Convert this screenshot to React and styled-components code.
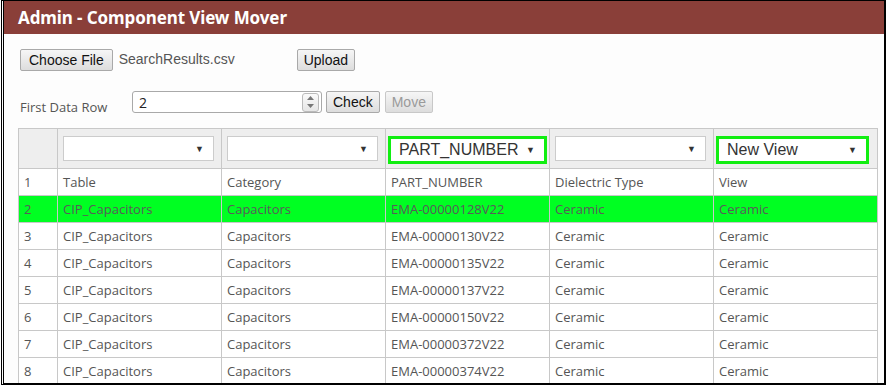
import React from "react";
import styled, { createGlobalStyle } from "styled-components";

const Global = createGlobalStyle`
  html, body { margin: 0; padding: 0; background: #fff; }
  body { font-family: "Open Sans", "Noto Sans", sans-serif; }
`;

const Frame = styled.div`
  margin-left: 1px;
  width: 880px;
  height: 382px;
  border-left: 3px double #000;
  border-top: 1px solid #000;
  border-right: 2px solid #000;
  border-bottom: 2px solid #000;
  overflow: hidden;
  background: #fdfdfd;
`;

const Header = styled.div`
  height: 33px;
  background: #8a3f39;
  color: #fff;
  font-family: "Noto Sans", sans-serif;
  font-weight: 700;
  font-size: 17px;
  letter-spacing: -0.1px;
  line-height: 34px;
  padding-left: 14px;
`;

const Body = styled.div`
  padding: 15px 0 0 14px;
`;

const Row = styled.div`
  display: flex;
  align-items: center;
  height: 22px;
  margin-left: 2px;
  margin-bottom: ${(p) => p.$mb || 0}px;
`;

const Btn = styled.button`
  height: 22px;
  padding: 0 ${(p) => p.$px ?? 6}px;
  font-family: "Liberation Sans", Arial, sans-serif;
  font-size: 14px;
  color: ${(p) => (p.disabled ? "#9a9a9a" : "#111")};
  background: linear-gradient(#f6f6f6, #dddddd);
  border: 1px solid ${(p) => (p.disabled ? "#c8c8c8" : "#a9a9a9")};
  border-radius: 2px;
  margin-left: ${(p) => p.$ml || 0}px;
  cursor: default;
`;

const FileName = styled.span`
  font-family: "Liberation Sans", Arial, sans-serif;
  font-size: 14px;
  color: #555;
  margin-left: 6px;
  width: 178px;
  position: relative;
  top: -1px;
`;

const Label = styled.span`
  font-size: 13px;
  color: #555;
  width: 112px;
  position: relative;
  top: 5px;
`;

const NumBox = styled.div`
  width: 182px;
  height: 20px;
  border: 1px solid #a9a9a9;
  border-radius: 3px;
  background: #fff;
  display: flex;
  align-items: center;
  justify-content: space-between;
  padding-left: 6px;
  font-size: 14px;
  color: #222;
  box-sizing: content-box;
`;

const Spin = styled.div`
  width: 15px;
  height: 17px;
  margin-right: 2px;
  border: 1px solid #bbb;
  border-radius: 3px;
  background: linear-gradient(#fafafa, #e6e6e6);
  display: flex;
  flex-direction: column;
  align-items: center;
  justify-content: space-around;
`;

const Table = styled.table`
  border-collapse: collapse;
  width: 859px;
  margin-top: 15px;
  table-layout: fixed;
  font-size: 13px;
  color: #555;
`;

const SelRow = styled.tr`
  background: #eeeeee;
  height: 40px;
`;

const Td = styled.td`
  border: 1px solid #c8c8c8;
  padding: 0 0 0 5px;
  height: 26px;
  white-space: nowrap;
  overflow: hidden;
`;

const DataRow = styled.tr`
  background: ${(p) => (p.$hl ? "#00ff22" : "#fff")};
  color: ${(p) => (p.$hl ? "#5a5a5a" : "#555")};
`;

const Select = styled.div`
  width: ${(p) => p.$w}px;
  height: ${(p) => (p.$hl ? 24 : 25)}px;
  margin-top: ${(p) => (p.$hl ? 2 : 0)}px;
  margin-left: ${(p) => (p.$hl ? -1 : 0)}px;
  background: #fff;
  border: 1px solid #cccccc;
  outline: ${(p) => (p.$hl ? "3px solid #11ee11" : "none")};
  outline-offset: -1px;
  display: flex;
  align-items: center;
  justify-content: space-between;
  padding: 0 9px 0 ${(p) => (p.$hl ? 8 : 7)}px;
  box-sizing: border-box;
  font-family: "Liberation Sans", Arial, sans-serif;
  font-size: 16px;
  color: #333;
`;

const Arrow = styled.span`
  font-size: 9px;
  color: #333;
`;

const cols = [39, 164, 164, 164, 164, 164];

const rows = [
  ["1", "Table", "Category", "PART_NUMBER", "Dielectric Type", "View"],
  ["2", "CIP_Capacitors", "Capacitors", "EMA-00000128V22", "Ceramic", "Ceramic"],
  ["3", "CIP_Capacitors", "Capacitors", "EMA-00000130V22", "Ceramic", "Ceramic"],
  ["4", "CIP_Capacitors", "Capacitors", "EMA-00000135V22", "Ceramic", "Ceramic"],
  ["5", "CIP_Capacitors", "Capacitors", "EMA-00000137V22", "Ceramic", "Ceramic"],
  ["6", "CIP_Capacitors", "Capacitors", "EMA-00000150V22", "Ceramic", "Ceramic"],
  ["7", "CIP_Capacitors", "Capacitors", "EMA-00000372V22", "Ceramic", "Ceramic"],
  ["8", "CIP_Capacitors", "Capacitors", "EMA-00000374V22", "Ceramic", "Ceramic"],
];

const selects = [
  { v: "", w: 151 },
  { v: "", w: 151 },
  { v: "PART_NUMBER", w: 155 },
  { v: "", w: 151 },
  { v: "New View", w: 149 },
];

export default function App() {
  return (
    <>
      <Global />
      <Frame>
        <Header>Admin - Component View Mover</Header>
        <Body>
          <Row $mb={20}>
            <Btn $px={8}>Choose File</Btn>
            <FileName>SearchResults.csv</FileName>
            <Btn>Upload</Btn>
          </Row>
          <Row>
            <Label>First Data Row</Label>
            <NumBox>
              <span>2</span>
              <Spin>
                <svg width="7" height="4" viewBox="0 0 7 4"><path d="M0 4 L3.5 0 L7 4Z" fill="#777" /></svg>
                <svg width="7" height="4" viewBox="0 0 7 4"><path d="M0 0 L3.5 4 L7 0Z" fill="#777" /></svg>
              </Spin>
            </NumBox>
            <Btn $ml={4}>Check</Btn>
            <Btn $ml={5} disabled>Move</Btn>
          </Row>
          <Table>
            <colgroup>
              {cols.map((w, i) => (
                <col key={i} style={{ width: w }} />
              ))}
            </colgroup>
            <tbody>
              <SelRow>
                <Td />
                {selects.map((s, i) => (
                  <Td key={i}>
                    <Select $hl={!!s.v} $w={s.w}>
                      <span>{s.v}</span>
                      <Arrow>▼</Arrow>
                    </Select>
                  </Td>
                ))}
              </SelRow>
              {rows.map((r, i) => (
                <DataRow key={i} $hl={i === 1}>
                  {r.map((c, j) => (
                    <Td key={j}>{c}</Td>
                  ))}
                </DataRow>
              ))}
            </tbody>
          </Table>
        </Body>
      </Frame>
    </>
  );
}
